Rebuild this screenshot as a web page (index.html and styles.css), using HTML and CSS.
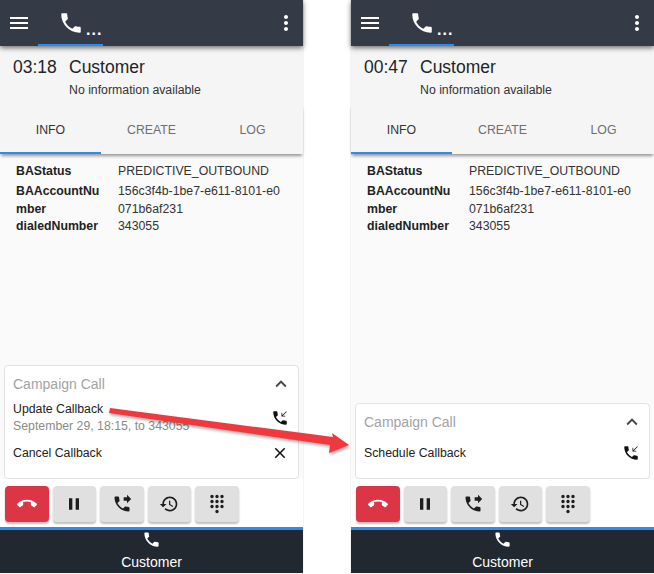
FILE: index.html
```html
<!DOCTYPE html>
<html lang="en">
<head>
<meta charset="utf-8">
<title>Campaign Call</title>
<link rel="stylesheet" href="styles.css">
</head>
<body>
<svg class="defs" width="0" height="0" aria-hidden="true">
  <symbol id="i-menu" viewBox="0 0 24 24"><path d="M3 18h18v-2H3v2zm0-5h18v-2H3v2zm0-7v2h18V6H3z"/></symbol>
  <symbol id="i-phone" viewBox="0 0 24 24"><path d="M6.62 10.79c1.44 2.83 3.76 5.14 6.59 6.59l2.2-2.2c.27-.27.67-.36 1.02-.24 1.12.37 2.33.57 3.57.57.55 0 1 .45 1 1V20c0 .55-.45 1-1 1-9.39 0-17-7.61-17-17 0-.55.45-1 1-1h3.5c.55 0 1 .45 1 1 0 1.25.2 2.45.57 3.57.11.35.03.74-.25 1.02l-2.2 2.2z"/></symbol>
  <symbol id="i-more" viewBox="0 0 24 24"><path d="M12 8c1.1 0 2-.9 2-2s-.9-2-2-2-2 .9-2 2 .9 2 2 2zm0 2c-1.1 0-2 .9-2 2s.9 2 2 2 2-.9 2-2-.9-2-2-2zm0 6c-1.1 0-2 .9-2 2s.9 2 2 2 2-.9 2-2-.9-2-2-2z"/></symbol>
  <symbol id="i-end" viewBox="0 0 24 24"><path d="M12 9c-1.6 0-3.15.25-4.6.72v3.1c0 .39-.23.74-.56.9-.98.49-1.87 1.12-2.66 1.85-.18.18-.43.28-.7.28-.28 0-.53-.11-.71-.29L.29 13.08c-.18-.17-.29-.42-.29-.7 0-.28.11-.53.29-.71C3.34 8.78 7.46 7 12 7s8.66 1.78 11.71 4.67c.18.18.29.43.29.71 0 .28-.11.53-.29.71l-2.48 2.48c-.18.18-.43.29-.71.29-.27 0-.52-.11-.7-.28-.79-.74-1.69-1.36-2.67-1.85-.33-.16-.56-.5-.56-.9v-3.1C15.15 9.25 13.6 9 12 9z"/></symbol>
  <symbol id="i-pause" viewBox="0 0 24 24"><path d="M6 19h4V5H6v14zm8-14v14h4V5h-4z"/></symbol>
  <symbol id="i-forward" viewBox="0 0 24 24"><path d="M18 11l5-5-5-5v3h-4v4h4v3zm2 4.5c-1.25 0-2.45-.2-3.57-.57-.35-.11-.74-.03-1.02.24l-2.2 2.2c-2.83-1.44-5.15-3.75-6.59-6.59l2.2-2.21c.28-.26.36-.65.25-1C8.7 6.45 8.5 5.25 8.5 4c0-.55-.45-1-1-1H4c-.55 0-1 .45-1 1 0 9.39 7.61 17 17 17 .55 0 1-.45 1-1v-3.5c0-.55-.45-1-1-1z"/></symbol>
  <symbol id="i-history" viewBox="0 0 24 24"><path d="M13 3c-4.97 0-9 4.03-9 9H1l3.89 3.89.07.14L9 12H6c0-3.87 3.13-7 7-7s7 3.13 7 7-3.13 7-7 7c-1.93 0-3.68-.79-4.94-2.06l-1.42 1.42C8.27 19.99 10.51 21 13 21c4.97 0 9-4.03 9-9s-4.03-9-9-9zm-1 5v5l4.28 2.54.72-1.21-3.5-2.08V8H12z"/></symbol>
  <symbol id="i-dialpad" viewBox="0 0 24 24"><path d="M12 19c-1.1 0-2 .9-2 2s.9 2 2 2 2-.9 2-2-.9-2-2-2zM6 1c-1.1 0-2 .9-2 2s.9 2 2 2 2-.9 2-2-.9-2-2-2zm0 6c-1.1 0-2 .9-2 2s.9 2 2 2 2-.9 2-2-.9-2-2-2zm0 6c-1.1 0-2 .9-2 2s.9 2 2 2 2-.9 2-2-.9-2-2-2zm12-8c1.1 0 2-.9 2-2s-.9-2-2-2-2 .9-2 2 .9 2 2 2zm-6 8c-1.1 0-2 .9-2 2s.9 2 2 2 2-.9 2-2-.9-2-2-2zm6 0c-1.1 0-2 .9-2 2s.9 2 2 2 2-.9 2-2-.9-2-2-2zm0-6c-1.1 0-2 .9-2 2s.9 2 2 2 2-.9 2-2-.9-2-2-2zm-6 0c-1.1 0-2 .9-2 2s.9 2 2 2 2-.9 2-2-.9-2-2-2zm0-6c-1.1 0-2 .9-2 2s.9 2 2 2 2-.9 2-2-.9-2-2-2z"/></symbol>
  <symbol id="i-callback" viewBox="0 0 24 24"><path d="M20 15.5c-1.25 0-2.45-.2-3.57-.57-.35-.11-.74-.03-1.02.24l-2.2 2.2c-2.83-1.44-5.15-3.75-6.59-6.59l2.2-2.21c.28-.26.36-.65.25-1C8.7 6.45 8.5 5.25 8.5 4c0-.55-.45-1-1-1H4c-.55 0-1 .45-1 1 0 9.39 7.61 17 17 17 .55 0 1-.45 1-1v-3.5c0-.55-.45-1-1-1z"/><path d="M21 3.7 20.3 3 15 8.3V5h-1v5h5V9h-3.3z"/></symbol>
  <symbol id="i-close" viewBox="0 0 24 24"><path d="M19 6.41L17.59 5 12 10.59 6.41 5 5 6.41 10.59 12 5 17.59 6.41 19 12 13.41 17.59 19 19 17.59 13.41 12z"/></symbol>
  <symbol id="i-less" viewBox="0 0 24 24"><path d="M12 8l-6 6 1.41 1.41L12 10.83l4.59 4.58L18 14z"/></symbol>
</svg>

<main class="screens">
  <section class="phone">
    <header class="topbar">
      <svg class="ic-menu"><use href="#i-menu"/></svg>
      <div class="calltab"><svg class="ic-call"><use href="#i-phone"/></svg><span class="dots">...</span></div>
      <svg class="ic-more"><use href="#i-more"/></svg>
    </header>
    <div class="callinfo">
      <div class="callrow"><span class="timer">03:18</span><span class="name">Customer</span></div>
      <div class="sub">No information available</div>
    </div>
    <nav class="tabs">
      <span class="tab active">INFO</span><span class="tab">CREATE</span><span class="tab">LOG</span>
    </nav>
    <dl class="details">
      <dt class="first">BAStatus</dt><dd class="first">PREDICTIVE_OUTBOUND</dd>
      <dt>BAAccountNu<br>mber</dt><dd>156c3f4b-1be7-e611-8101-e0<br>071b6af231</dd>
      <dt>dialedNumber</dt><dd>343055</dd>
    </dl>
    <section class="card">
      <div class="cardhead"><span>Campaign Call</span><svg class="ic-less"><use href="#i-less"/></svg></div>
      <div class="item tall">
        <div class="itemtext"><div>Update Callback</div><div class="muted">September 29, 18:15, to 343055</div></div>
        <svg class="ic-item"><use href="#i-callback"/></svg>
      </div>
      <div class="item">
        <div class="itemtext"><div>Cancel Callback</div></div>
        <svg class="ic-item"><use href="#i-close"/></svg>
      </div>
    </section>
    <div class="actions">
      <button class="btn danger" type="button"><svg><use href="#i-end"/></svg></button>
      <button class="btn" type="button"><svg><use href="#i-pause"/></svg></button>
      <button class="btn" type="button"><svg><use href="#i-forward"/></svg></button>
      <button class="btn" type="button"><svg><use href="#i-history"/></svg></button>
      <button class="btn" type="button"><svg><use href="#i-dialpad"/></svg></button>
    </div>
    <footer class="bottom"><svg class="ic-bottom"><use href="#i-phone"/></svg><span>Customer</span></footer>
  </section>

  <section class="phone">
    <header class="topbar">
      <svg class="ic-menu"><use href="#i-menu"/></svg>
      <div class="calltab"><svg class="ic-call"><use href="#i-phone"/></svg><span class="dots">...</span></div>
      <svg class="ic-more"><use href="#i-more"/></svg>
    </header>
    <div class="callinfo">
      <div class="callrow"><span class="timer">00:47</span><span class="name">Customer</span></div>
      <div class="sub">No information available</div>
    </div>
    <nav class="tabs">
      <span class="tab active">INFO</span><span class="tab">CREATE</span><span class="tab">LOG</span>
    </nav>
    <dl class="details">
      <dt class="first">BAStatus</dt><dd class="first">PREDICTIVE_OUTBOUND</dd>
      <dt>BAAccountNu<br>mber</dt><dd>156c3f4b-1be7-e611-8101-e0<br>071b6af231</dd>
      <dt>dialedNumber</dt><dd>343055</dd>
    </dl>
    <section class="card">
      <div class="cardhead"><span>Campaign Call</span><svg class="ic-less"><use href="#i-less"/></svg></div>
      <div class="item">
        <div class="itemtext"><div>Schedule Callback</div></div>
        <svg class="ic-item"><use href="#i-callback"/></svg>
      </div>
    </section>
    <div class="actions">
      <button class="btn danger" type="button"><svg><use href="#i-end"/></svg></button>
      <button class="btn" type="button"><svg><use href="#i-pause"/></svg></button>
      <button class="btn" type="button"><svg><use href="#i-forward"/></svg></button>
      <button class="btn" type="button"><svg><use href="#i-history"/></svg></button>
      <button class="btn" type="button"><svg><use href="#i-dialpad"/></svg></button>
    </div>
    <footer class="bottom"><svg class="ic-bottom"><use href="#i-phone"/></svg><span>Customer</span></footer>
  </section>
</main>

<svg class="arrow" width="654" height="574" viewBox="0 0 654 574" aria-hidden="true">
  <polygon points="110,408 333,437 332,433 349,445 329,453 330,445 109,413"/>
</svg>
</body>
</html>
```

FILE: styles.css
```css
* { box-sizing: border-box; }
html, body { margin: 0; height: 100%; }
body {
  position: relative;
  background: #fff;
  font-family: "Liberation Sans", Arial, sans-serif;
  color: #212529;
  overflow: hidden;
}
.defs { position: absolute; }
svg { display: block; fill: currentColor; }

.screens {
  display: flex;
  justify-content: space-between;
  height: 574px;
}
.phone {
  width: 303px;
  display: flex;
  flex-direction: column;
  height: 573px;
  background: #fafafa;
  box-shadow: 0 0 1px #bbb;
}

.topbar {
  flex: none;
  height: 46px;
  position: relative;
  z-index: 3;
  display: flex;
  align-items: center;
  background: #343a46;
  color: #fff;
  box-shadow: 0 2px 5px rgba(0,0,0,.55);
}
.ic-menu { width: 24px; height: 24px; margin-left: 7px; }
.calltab {
  width: 65px;
  height: 46px;
  margin-left: 7px;
  display: flex;
  align-items: flex-start;
  padding: 10px 0 0 20px;
  border-bottom: 2px solid #2a8cf0;
}
.ic-call { width: 26px; height: 26px; flex: none; }
.dots {
  font-size: 16px;
  font-weight: 700;
  line-height: 1;
  margin: 12px 0 0 2px;
  letter-spacing: 1px;
}
.ic-more { width: 24px; height: 24px; margin-left: auto; margin-right: 5px; }

.callinfo {
  flex: none;
  height: 59px;
  padding: 11px 0 0 13px;
  background: #f5f5f5;
}
.callrow { display: flex; font-size: 17.5px; line-height: 21px; }
.timer { width: 56px; }
.sub { font-size: 12.3px; line-height: 15px; margin: 5px 0 0 56px; color: #333; }

.tabs {
  flex: none;
  height: 49px;
  position: relative;
  z-index: 2;
  display: flex;
  background: #f5f5f5;
  box-shadow: 0 3px 3px -1px rgba(0,0,0,.4);
}
.tab {
  flex: 1;
  padding-top: 1px;
  text-align: center;
  font-size: 12.3px;
  line-height: 48px;
  color: #6e6e6e;
}
.tab.active { color: #333; border-bottom: 2px solid #2a8cf0; }

.details {
  flex: 1;
  margin: 0;
  padding: 9px 4px 0 16px;
  display: grid;
  grid-template-columns: 102px 1fr;
  grid-auto-rows: min-content;
  font-size: 12.3px;
  line-height: 17.5px;
}
.details dt { font-weight: 700; color: #222; }
.details dd { margin: 0; color: #333; }
.details .first { margin-bottom: 2.5px; }

.card {
  flex: none;
  margin: 0 4px;
  padding: 0 8px 13px 8px;
  background: #fff;
  border: 1px solid #e2e2e2;
  border-radius: 4px;
}
.cardhead {
  display: flex;
  justify-content: space-between;
  align-items: center;
  height: 35px;
  font-size: 14px;
  color: #a3a3a3;
}
.ic-less { width: 22px; height: 22px; margin-right: -2px; color: #444; }
.item {
  display: flex;
  justify-content: space-between;
  align-items: center;
  height: 24px;
  margin-top: 2px;
  font-size: 12.3px;
  line-height: 17px;
  color: #222;
}
.item.tall { height: 34px; margin: 0 0 6px; }
.muted { color: #8a8a8a; }
.ic-item { width: 18px; height: 18px; margin-right: 1px; color: #111; }

.actions {
  flex: none;
  height: 48px;
  display: flex;
  gap: 4px;
  padding: 7px 0 0 5px;
  background: #fff;
}
.btn {
  width: 43.5px;
  height: 36px;
  padding: 0;
  border: 0;
  border-radius: 4px;
  display: flex;
  align-items: center;
  justify-content: center;
  background: #e0e0e0;
  color: #1d1d1d;
  box-shadow: 0 2px 2px rgba(0,0,0,.25);
}
.btn svg { width: 20px; height: 20px; }
.btn.danger { background: #dc3545; color: #fff; }

.bottom {
  flex: none;
  height: 46px;
  display: flex;
  flex-direction: column;
  align-items: center;
  background: #212830;
  border-top: 3px solid #2a8cf0;
  color: #fff;
  font-size: 14px;
  line-height: 16px;
}
.ic-bottom { width: 19px; height: 19px; margin-bottom: 5px; }

.arrow {
  position: absolute;
  left: 0;
  top: 0;
  fill: #f0383f;
  filter: drop-shadow(1px 2px 1.5px rgba(0,0,0,.35));
}
```
